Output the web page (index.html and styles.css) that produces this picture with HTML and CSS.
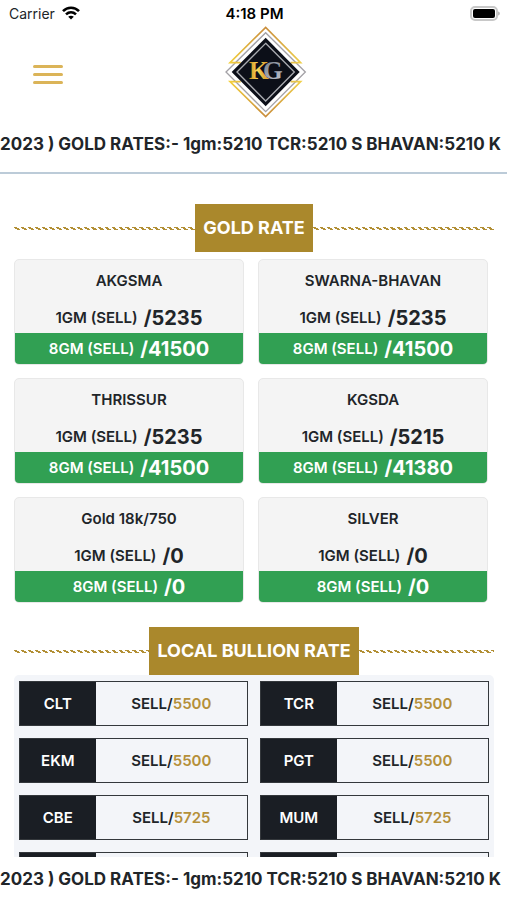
FILE: index.html
```html
<!DOCTYPE html>
<html lang="en">
<head>
    <meta charset="UTF-8">
    <meta name="viewport" content="width=device-width, initial-scale=1.0">
    <title>Gold Rate</title>
    <link rel="stylesheet" href="styles.css">
</head>
<body>

    <header>
        <div class="status-bar">
            <div class="carrier">
                <span>Carrier</span>
                <svg width="18" height="14" viewBox="0 0 18 14" fill="none" stroke="#000" stroke-width="2.6">
                    <path d="M1 5.2C5.400 .6 12.600 .6 17 5.200"/>
                    <path d="M4 8.400C7 5.600 11 5.600 14 8.400"/>
                    <path d="M9 13.500L6.200 10.800C7.800 9.400 10.200 9.400 11.800 10.800Z" fill="#000" stroke="none"/>
                </svg>
            </div>
            <span class="time">4:18 PM</span>
            <svg class="battery" width="30" height="15" viewBox="0 0 30 15">
                <rect x="1" y="1" width="26" height="13" rx="4" fill="#fff" stroke="#c8c8c8" stroke-width="2"/>
                <rect x="3" y="3" width="22" height="9" rx="2" fill="#000"/>
                <path d="M28 5.500C30.500 6 30.500 9 28 9.500Z" fill="#bbb"/>
            </svg>
        </div>
        <div class="top-bar">
            <button class="menu-button" type="button" aria-label="Menu">
                <span></span>
                <span></span>
                <span></span>
            </button>
            <svg class="logo" width="82" height="92" viewBox="45 75 246 276">
                <defs>
                    <linearGradient id="gold" x1="0" y1="0" x2="1" y2="0">
                        <stop offset="0" stop-color="#f3cf3c"/>
                        <stop offset=".5" stop-color="#c98d3c"/>
                        <stop offset="1" stop-color="#efcf4a"/>
                    </linearGradient>
                    <linearGradient id="letters" x1="0" y1="0" x2="1" y2="0">
                        <stop offset="0" stop-color="#c98a1c"/>
                        <stop offset=".25" stop-color="#f8d85a"/>
                        <stop offset=".45" stop-color="#e0ab36"/>
                    </linearGradient>
                    <linearGradient id="silver" x1="0" y1="0" x2="1" y2="1">
                        <stop offset=".3" stop-color="#7b828d"/>
                        <stop offset="1" stop-color="#c3cad4"/>
                    </linearGradient>
                </defs>
                <path d="M167 95L286 213L167 332L48 213Z" fill="#fff" stroke="#a3a1a6" stroke-width="4"/>
                <path d="M92 185H60L167 79L272 185H242" fill="none" stroke="url(#gold)" stroke-width="5"/>
                <path d="M92 242H60L167 347L272 242H242" fill="none" stroke="url(#gold)" stroke-width="5"/>
                <path d="M167 110L269 213L167 316L65 213Z" fill="#0c0f18"/>
                <path d="M167 127L253 213L167 300L81 213Z" fill="none" stroke="#a9abb0" stroke-width="4"/>
                <text class="logo-text" x="117" y="235" fill="url(#letters)">K<tspan dx="-17" fill="url(#silver)">G</tspan></text>
            </svg>
        </div>
        <div class="ticker">2023 ) GOLD RATES:- 1gm:5210 TCR:5210 S BHAVAN:5210 K</div>
    </header>

    <main>
        <section>
            <div class="section-title">
                <h2>GOLD RATE</h2>
            </div>
            <div class="gold-grid">
                <div class="gold-card">
                    <h3>AKGSMA</h3>
                    <p>1GM (SELL) <b>/5235</b></p>
                    <p class="green">8GM (SELL) <b>/41500</b></p>
                </div>
                <div class="gold-card">
                    <h3>SWARNA-BHAVAN</h3>
                    <p>1GM (SELL) <b>/5235</b></p>
                    <p class="green">8GM (SELL) <b>/41500</b></p>
                </div>
                <div class="gold-card">
                    <h3>THRISSUR</h3>
                    <p>1GM (SELL) <b>/5235</b></p>
                    <p class="green">8GM (SELL) <b>/41500</b></p>
                </div>
                <div class="gold-card">
                    <h3>KGSDA</h3>
                    <p>1GM (SELL) <b>/5215</b></p>
                    <p class="green">8GM (SELL) <b>/41380</b></p>
                </div>
                <div class="gold-card">
                    <h3>Gold 18k/750</h3>
                    <p>1GM (SELL) <b>/0</b></p>
                    <p class="green">8GM (SELL) <b>/0</b></p>
                </div>
                <div class="gold-card">
                    <h3>SILVER</h3>
                    <p>1GM (SELL) <b>/0</b></p>
                    <p class="green">8GM (SELL) <b>/0</b></p>
                </div>
            </div>
        </section>

        <section>
            <div class="section-title">
                <h2>LOCAL BULLION RATE</h2>
            </div>
            <div class="bullion-grid">
                <div class="bullion"><h3>CLT</h3><p>SELL/<span>5500</span></p></div>
                <div class="bullion"><h3>TCR</h3><p>SELL/<span>5500</span></p></div>
                <div class="bullion"><h3>EKM</h3><p>SELL/<span>5500</span></p></div>
                <div class="bullion"><h3>PGT</h3><p>SELL/<span>5500</span></p></div>
                <div class="bullion"><h3>CBE</h3><p>SELL/<span>5725</span></p></div>
                <div class="bullion"><h3>MUM</h3><p>SELL/<span>5725</span></p></div>
                <div class="bullion"><h3></h3><p></p></div>
                <div class="bullion"><h3></h3><p></p></div>
            </div>
        </section>
    </main>

    <footer>
        <div class="ticker">2023 ) GOLD RATES:- 1gm:5210 TCR:5210 S BHAVAN:5210 K</div>
    </footer>

</body>
</html>
```
FILE: styles.css
```css
* {
    box-sizing: border-box;
}
body {
    font-family: Inter, "Liberation Sans", sans-serif;
    background-color: white;
    color: #212529;
    margin: 0;
    height: 100vh;
    display: flex;
    flex-direction: column;
}
h2, h3, p {
    margin: 0;
    font-weight: 600;
}
header {
    border-bottom: 2px solid #bccbd8;
}
/* Status bar */
.status-bar {
    display: grid;
    grid-template-columns: 1fr auto 1fr;
    align-items: center;
    height: 26px;
    padding: 0 7px 0 9px;
    font-size: 14px;
}
.carrier {
    display: flex;
    align-items: center;
    gap: 7px;
}
.time {
    font-size: 15px;
    font-weight: 600;
    color: #000;
}
.battery {
    justify-self: end;
}
/* Menu and logo */
.top-bar {
    display: grid;
    grid-template-columns: 1fr auto 1fr;
    align-items: center;
    padding: 0 8px 0 32px;
}
.menu-button {
    display: flex;
    flex-direction: column;
    gap: 5px;
    width: 32px;
    padding: 4px 1px 0;
    border: none;
    background: none;
    cursor: pointer;
}
.menu-button span {
    height: 3px;
    border-radius: 2px;
    background-color: #dbb458;
}
.logo {
    display: block;
}
.logo-text {
    font-family: "Liberation Serif", serif;
    font-weight: bold;
    font-size: 76px;
}
.ticker {
    overflow: hidden;
    white-space: nowrap;
    font-size: 17px;
    font-weight: 700;
    line-height: 20px;
}
header .ticker {
    padding: 16px 0 18px;
}
main {
    flex: 1;
    min-height: 0;
    overflow-y: auto;
    scrollbar-width: none;
    padding: 30px 13px 0 14px;
}
/* Section titles on a rope line */
.section-title {
    display: flex;
    align-items: center;
}
.section-title::before,
.section-title::after {
    content: "";
    flex: 1;
    height: 3px;
    background: repeating-linear-gradient(35deg, transparent 0 2px, #b28f35 2px 4px);
}
.section-title h2 {
    padding: 0 8px;
    background-color: #aa882c;
    color: white;
    font-size: 18px;
    font-weight: 700;
    line-height: 48px;
}
.gold-grid {
    display: grid;
    grid-template-columns: 1fr 1fr;
    gap: 13px 14px;
    padding: 7px 6px 24px 0;
}
.gold-card {
    overflow: hidden;
    border: 1px solid #e8e8e8;
    border-radius: 5px;
    background-color: #f4f4f4;
    text-align: center;
    font-size: 15px;
}
.gold-card h3 {
    padding: 11px 0;
    font-size: 15px;
    line-height: 20px;
}
.gold-card p {
    display: flex;
    justify-content: center;
    align-items: center;
    gap: 6px;
    height: 31px;
    line-height: 30px;
}
.gold-card b {
    font-size: 20px;
    font-weight: 700;
}
.gold-card .green {
    background-color: #31a053;
    color: white;
}
.bullion-grid {
    display: grid;
    grid-template-columns: 1fr 1fr;
    gap: 12px;
    padding: 6px 5px;
    border-radius: 5px;
    background-color: #f3f5f9;
}
.bullion {
    display: grid;
    grid-template-columns: 1fr 2fr;
    min-height: 45px;
    border: 1px solid #34383c;
    text-align: center;
    font-size: 15px;
    line-height: 43px;
}
.bullion h3 {
    background-color: #1a1e24;
    color: white;
    font-size: 15px;
}
.bullion span {
    color: #b5903a;
}
footer {
    padding: 12px 0 11px;
    background-color: white;
}
```
